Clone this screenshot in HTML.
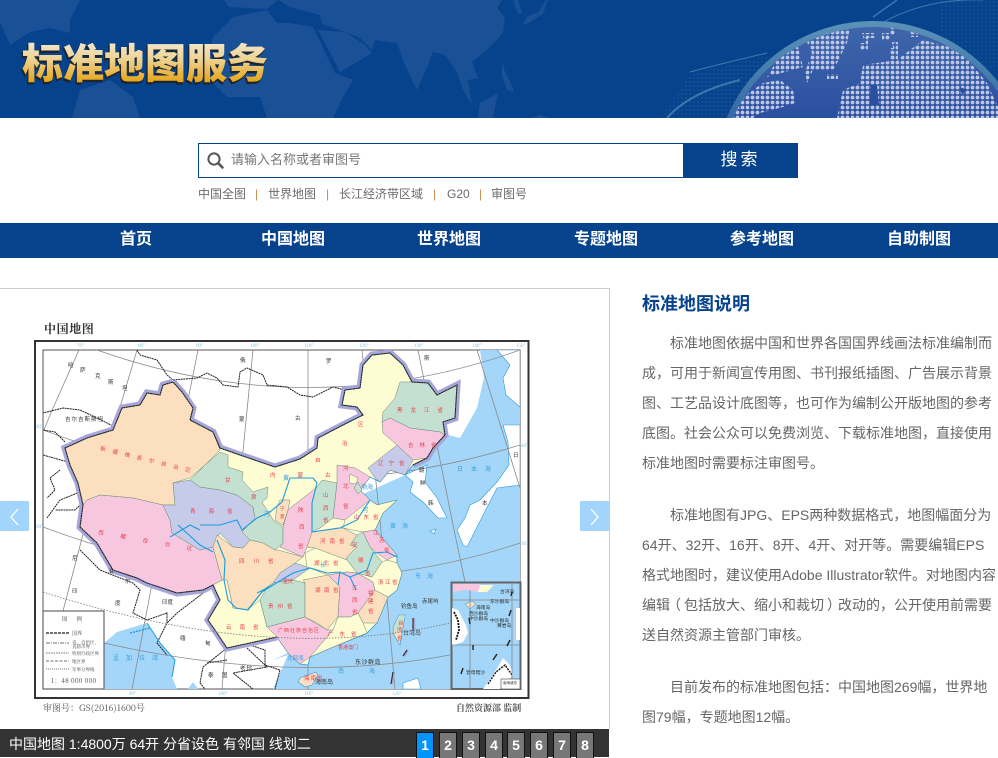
<!DOCTYPE html>
<html lang="zh-CN">
<head>
<meta charset="utf-8">
<title>标准地图服务</title>
<style>
html,body{margin:0;padding:0;background:#fff}
body{width:998px;height:757px;overflow:hidden;position:relative;font-family:"Liberation Sans","Noto Sans CJK SC",sans-serif}
.abs{position:absolute;white-space:nowrap}
#search{left:198px;top:143px;width:600px;height:35px;box-sizing:border-box;border:1px solid #06438c;background:#fff}
#btn{left:683px;top:143px;width:115px;height:35px;background:#06438c;color:#fff;font-size:17px;line-height:34px;text-align:center;letter-spacing:3px}
#ph{left:231px;top:151px;font-size:13px;line-height:18px;color:#777}
.lk{top:186px;font-size:12px;line-height:16px;color:#6b6b6b}
.sep{top:186px;font-size:12px;line-height:16px;color:#c08a50}
#nav{left:0;top:223px;width:998px;height:35px;background:#06438c}
.ni{top:223px;width:120px;text-align:center;color:#fff;font-weight:700;font-size:16px;line-height:33px}
#box{left:-1px;top:288px;width:611px;height:441px;box-sizing:border-box;border:1px solid #ccc;border-left:0;border-bottom:0;background:#fff}
.arr{top:501px;width:29px;height:30px;background:#a3d5fc}
#bar{left:0;top:729px;width:609px;height:28px;background:#333}
#cap{left:9px;top:734px;color:#fff;font-size:14px;line-height:20px}
.pg{top:732px;width:16px;height:25px;border:1px solid #111;border-bottom:0;background:#777;color:#fff;font-weight:700;font-size:14px;line-height:25px;text-align:center;margin-left:-1px}
#tt{left:642px;top:291px;color:#06438c;font-size:18px;font-weight:700;line-height:26px}
.p{left:642px;font-size:14px;line-height:30px;color:#666}
.ind{display:inline-block;width:28px}
.c{font-family:"Noto Sans CJK TC",sans-serif}
.l{position:relative;left:-3px}
.r{position:relative;left:3px}
</style>
</head>
<body>

<svg class="abs" style="left:0;top:0" width="998" height="118" viewBox="0 0 998 118">
<defs>
<linearGradient id="g" x1="0" y1="40" x2="0" y2="83" gradientUnits="userSpaceOnUse">
<stop offset="0" stop-color="#f3ead2"/><stop offset=".45" stop-color="#edd293"/><stop offset="1" stop-color="#e6a312"/>
</linearGradient>
<pattern id="dots" width="5" height="5" patternUnits="userSpaceOnUse"><circle cx="2.5" cy="2.5" r="1.9" fill="#bcc6e4"/></pattern>
<pattern id="fine" width="4" height="4" patternUnits="userSpaceOnUse"><circle cx="2" cy="2" r=".8" fill="#3f74b0"/></pattern>
<clipPath id="ball"><circle cx="873" cy="180" r="153"/></clipPath>
<linearGradient id="ballg" x1="0" y1="27" x2="0" y2="118" gradientUnits="userSpaceOnUse"><stop offset="0" stop-color="#3f66ab"/><stop offset="1" stop-color="#2b4fa0"/></linearGradient>
<linearGradient id="ring" x1="0" y1="21" x2="0" y2="118" gradientUnits="userSpaceOnUse"><stop offset="0" stop-color="#5c92b8"/><stop offset="1" stop-color="#336aa6"/></linearGradient>
</defs>
<rect width="998" height="118" fill="#06438c"/>
<g fill="#1a5096">
<path d="M0,0H80L70,20L70,33L50,28L30,32L10,45L0,22Z"/>
<path d="M72,118L80,90L110,80L133,97L140,118Z"/>
<path d="M224,0H278L267,9L229,7Z"/>
<path d="M213,37L233,17L267,10L277,23L290,23L313,27L335,73L353,80L343,97L333,118H267L260,97L227,97L213,83L210,57Z"/>
<path d="M278,0L290,7L320,15L322,24L345,32L360,38L372,50L375,40L397,43L405,65L417,90L428,65L433,52L445,55L457,72L463,90L472,105L468,80L478,78L472,62L487,50L503,33L505,17L497,8L502,0Z"/>
<path d="M318,30L345,32L365,45L372,53L340,72Z"/>
<path d="M513,0H518L522,13L518,14Z"/>
<path d="M523,23L528,16L538,12L546,0H548L543,14L530,22L525,25Z"/>
<path d="M502,62L505,72L512,85L514,92L507,90L502,75Z"/>
<path d="M478,118L480,103L498,93L493,118Z"/>
<path d="M530,118L540,115L550,118Z"/>
</g>
<path d="M660,118L690,75L770,55L770,118Z" fill="url(#fine)" opacity=".5"/>
<rect x="940" y="0" width="58" height="70" fill="url(#fine)" opacity=".45"/>
<g fill="none" stroke="#4d82b8" opacity=".8">
<path d="M667,118Q690,92 740,80" stroke-width="2"/>
<path d="M690,72Q720,64 767,53" stroke-width="1.2"/>
<path d="M873,17L897,0" stroke-width="1.5"/>
<path d="M880,24Q925,-2 983,0" stroke-width="1"/>
</g>
<circle cx="873" cy="180" r="159" fill="url(#ring)"/>
<circle cx="873" cy="180" r="153" fill="url(#ballg)"/>
<g clip-path="url(#ball)" fill="url(#dots)">
<path d="M850,28L847,43L837,63L833,70L813,70L807,83L805,72L812,53L807,42L827,33Z"/>
<path d="M797,43L803,67L767,77L777,60Z"/>
<path d="M827,74H838V79H827Z"/>
<path d="M863,65L897,60L923,40L960,50L987,83L998,107V118H837L843,90L860,83Z"/>
<path d="M733,118L743,97L763,83L780,80L793,90L795,103L783,107L760,113L753,118Z"/>
<path d="M862,33H875V38H868V50H860V43H865Z"/>
<path d="M882,33H890V40H882ZM890,28H895V35H890ZM892,42H898V60H890V48H893ZM910,32H918V37H910Z"/>
</g>
<g fill="#2b4fa0"><path d="M871,85H877L879,105H870ZM960,87L967,90L962,95Z"/></g>
<text x="21" y="80" font-family="'Noto Sans CJK SC',sans-serif" font-size="41" font-weight="900" fill="#1e2430" stroke="#1e2430" stroke-width=".8">标准地图服务</text>
<text x="22" y="78" font-family="'Noto Sans CJK SC',sans-serif" font-size="41" font-weight="900" fill="url(#g)">标准地图服务</text>
</svg>

<div class="abs" id="search"></div>
<svg class="abs" style="left:206px;top:151px" width="20" height="20" viewBox="0 0 20 20"><circle cx="8" cy="8" r="5.6" fill="none" stroke="#555" stroke-width="2"/><path d="M12.2,12.2L16.5,16.5" stroke="#555" stroke-width="2.6" stroke-linecap="round"/></svg>
<div class="abs" id="ph">请输入名称或者审图号</div>
<div class="abs" id="btn">搜索</div>

<div class="abs lk" style="left:198px">中国全图</div><div class="abs sep" style="left:255px">|</div>
<div class="abs lk" style="left:268px">世界地图</div><div class="abs sep" style="left:326px">|</div>
<div class="abs lk" style="left:339px">长江经济带区域</div><div class="abs sep" style="left:433px">|</div>
<div class="abs lk" style="left:447px">G20</div><div class="abs sep" style="left:479px">|</div>
<div class="abs lk" style="left:491px">审图号</div>

<div class="abs" id="nav"></div>
<div class="abs ni" style="left:76px">首页</div>
<div class="abs ni" style="left:233px">中国地图</div>
<div class="abs ni" style="left:389px">世界地图</div>
<div class="abs ni" style="left:546px">专题地图</div>
<div class="abs ni" style="left:702px">参考地图</div>
<div class="abs ni" style="left:859px">自助制图</div>

<div class="abs" id="box"></div>

<svg class="abs" style="left:0;top:288px;filter:blur(.3px)" width="608" height="441" viewBox="0 288 608 441">
<defs>
<path id="china" d="M173,382L182,392L193,408L190,420L213,432L220,448L240,455L275,467L300,459L317,448L318,438L343,425L363,415L357,407L342,405L345,390L360,388L363,365L372,355L390,353L403,365L412,382L428,383L437,395L457,385L455,418L443,422L445,435L433,448L427,458L413,465L405,475L390,470L380,482L370,477L360,490L370,500L377,505L397,500L383,513L375,530L397,555L397,563L402,573L397,590L388,597L377,623L367,633L363,635L333,647L310,657L308,665L300,664L288,653L277,637L250,643L227,648L217,633L208,620L220,600L213,585L203,590L177,593L147,583L137,578L113,570L97,543L80,527L83,505L78,483L70,465L65,448L87,438L113,430L122,408L140,405L147,393L160,395L163,385Z"/>
<path id="b1" d="M173,382L182,392L193,408L190,420L213,432L220,448L240,455L275,467L300,459L317,448L318,438L343,425L363,415L357,407L342,405L345,390L360,388L363,365L372,355L390,353L403,365L412,382L428,383L437,395L457,385L455,418L443,422L445,435L433,448L427,458L413,465"/>
<path id="b2" d="M277,637L250,643L227,648L217,633L208,620L220,600L213,585L203,590L177,593L147,583L137,578L113,570L97,543L80,527L83,505L78,483L70,465L65,448L87,438L113,430L122,408L140,405L147,393L160,395L163,385L173,382"/>
<clipPath id="inset"><rect x="452" y="584" width="68" height="105"/></clipPath>
<clipPath id="inner"><rect x="43" y="350" width="477" height="339"/></clipPath>
</defs>

<text x="44" y="333" font-family="'Noto Serif CJK SC',serif" font-size="12" font-weight="700" fill="#333" letter-spacing=".6">中国地图</text>
<rect x="35" y="341" width="493.500" height="357" fill="#fff" stroke="#333" stroke-width="2"/>
<rect x="43" y="350" width="477" height="339" fill="#fff" stroke="#555" stroke-width="1"/>

<g clip-path="url(#inner)">
<path d="M480,350L484,378L477,408L460,438L448,435L433,448L413,465L405,475L350,500L340,560L300,664L288,653L273,660V689H520V350Z" fill="#a3d6f8"/>
<path d="M104,643L117,632L147,623L160,643L175,660L172,677L177,689H104Z" fill="#a3d6f8"/>
<path d="M188,689L193,682L198,689Z" fill="#a3d6f8"/>
<g fill="#fff" stroke="#2a9ae0" stroke-width=".6">
<path d="M497,350L510,365L503,378L506,395L520,407V350Z"/>
<path d="M520,425L503,425L508,442L509,465L497,482L480,500L470,505L465,518L457,530L463,545L467,547L477,527L497,488L520,485V447Z"/>
<path d="M405,475L427,465L425,482L437,498L447,518L438,518L423,502L410,492L413,482Z"/>
<path d="M403,683L418,678L421,689H403Z"/>
<path d="M430,531L436,529L434,534Z"/>
</g>
<path d="M273,660L288,655L273,689Z" fill="#fff"/>

<g fill="none" stroke="#8a8a8a" stroke-width=".8">
<path d="M97,350Q310,425 520,350"/>
<path d="M43,430Q280,520 520,445"/>
<path d="M43,527Q290,620 520,543"/>
<path d="M104,643Q290,685 450,655"/>
<path d="M79,350L53,408L43,432"/>
<path d="M137,350L88,515L63,611"/>
<path d="M198,350L167,505L132,689"/>
<path d="M253,350L237,512L222,689"/>
<path d="M308,350V689"/>
<path d="M362,350L380,520L395,689"/>
<path d="M418,350L452,520L465,582"/>
<path d="M477,350L520,488"/>
</g>

<g fill="none" stroke="#222" stroke-width="1" stroke-dasharray="2 .6">
<path d="M137,350L140,355L157,360L167,375L173,380L197,378L207,373L217,378L223,385L238,387L240,372L247,368L263,375L267,385L287,387L300,395L313,397L333,387L345,390"/>
<path d="M117,428L97,418L80,410L63,408L43,413"/>
<path d="M65,442L55,432L43,430M68,462L43,455M47,518L60,500L80,492M83,502L75,510L55,510"/>
<path d="M60,470L50,478L55,490L47,498"/>
<path d="M80,550L100,570L133,583L140,590L133,613L147,620L167,613L167,623L157,643L167,655"/>
<path d="M207,590L177,613L167,623"/>
<path d="M227,648L203,667L200,683L205,689"/>
<path d="M247,648L267,667L233,673L253,689"/>
<path d="M227,660L207,663"/>
<path d="M250,645L265,650L265,665L280,670L275,689"/>
</g>

<use href="#b1" fill="none" stroke="#a8a6d9" stroke-width="7"/>
<use href="#b2" fill="none" stroke="#a8a6d9" stroke-width="7"/>
<use href="#china" fill="#fefcd3" stroke="#2a9ae0" stroke-width=".8"/>

<g stroke="#6d8a78" stroke-width=".5">
<path fill="#fbdfbe" d="M173,382L182,392L193,408L190,420L213,432L220,450L205,465L190,478L173,483L175,505L163,505L133,498L100,495L87,500L83,505L78,483L70,465L65,448L87,438L113,430L122,408L140,405L147,393L160,395L163,385Z"/>
<path fill="#f7c7df" d="M87,500L100,495L133,498L163,505L170,520L172,533L200,550L213,547L222,580L213,585L203,590L177,593L147,583L137,578L113,570L97,543L80,527L83,505Z"/>
<path fill="#c5cbe8" d="M190,480L200,487L220,490L237,495L253,507L255,518L242,532L250,540L243,548L233,547L220,533L213,547L200,550L172,533L170,520L163,505L175,505L173,483Z"/>
<path fill="#c3e0d0" d="M220,452L228,455L228,467L243,472L242,480L253,492L268,487L267,498L262,502L272,518L273,520L283,527L283,543L275,550L263,543L250,540L242,532L255,518L253,507L237,495L220,490L200,487L190,480L205,465Z"/>
<path fill="#fbdfbe" d="M280,500L290,500L288,510L283,525L275,520L277,507Z"/>
<path fill="#f7c7df" d="M290,508L307,495L317,487L312,503L312,533L307,547L303,557L280,547L283,543L283,527L288,510Z"/>
<path fill="#c3e0d0" d="M322,480L337,483L333,518L320,528L312,532L312,503L315,490Z"/>
<path fill="#f7c7df" d="M337,465L355,468L370,477L360,490L370,500L353,515L345,520L333,518L337,483Z"/>
<path fill="#fefcd3" d="M350,474L358,478L356,484L349,483Z"/>
<path fill="#c3e0d0" d="M358,482L362,490L358,494L354,488Z"/>
<path fill="#fefcd3" d="M345,520L370,500L377,505L397,500L383,513L375,530L363,532L343,528Z"/>
<path fill="#fbdfbe" d="M312,532L337,528L343,528L357,535L350,545L357,547L347,557L347,563L315,548L307,547Z"/>
<path fill="#f7c7df" d="M363,532L375,530L397,555L387,560L377,553L370,547Z"/>
<path fill="#c3e0d0" d="M357,535L363,532L370,547L382,562L372,577L357,573L347,560L347,557L357,547L350,545Z"/>
<path fill="#fefcd3" d="M305,553L315,548L347,560L357,573L347,572L328,575L307,567Z"/>
<path fill="#c5cbe8" d="M295,563L307,567L310,568L293,580L273,583L280,573Z"/>
<path fill="#fbdfbe" d="M217,535L233,547L243,548L250,540L263,543L275,550L278,550L303,557L295,563L280,573L273,583L263,590L247,610L233,608L227,580L222,580L213,547Z"/>
<path fill="#fefcd3" d="M222,580L227,580L233,608L247,610L260,600L267,627L277,637L250,643L227,648L217,633L208,620L220,600L213,585Z"/>
<path fill="#c3e0d0" d="M260,600L267,587L273,583L293,580L305,583L305,617L267,627Z"/>
<path fill="#f7c7df" d="M267,627L305,617L327,630L333,630L310,657L300,664L288,653L277,637Z"/>
<path fill="#fbdfbe" d="M303,580L328,575L340,587L338,617L327,630L317,623L305,617L305,583Z"/>
<path fill="#f7c7df" d="M328,575L347,572L357,573L373,582L375,590L358,613L350,617L338,617L340,587Z"/>
<path fill="#fbdfbe" d="M375,590L388,597L377,623L363,623L358,613Z"/>
<path fill="#fefcd3" d="M372,577L382,562L387,560L397,563L402,573L397,590L388,597L375,590L373,582L357,573Z"/>
<path fill="#fefcd3" d="M333,630L338,617L350,617L358,613L363,623L367,633L333,647L310,657Z"/>
<path fill="#c3e0d0" d="M383,412L395,398L400,382L412,382L428,383L437,395L457,385L455,418L443,422L445,435L440,432L410,428L390,418L382,422Z"/>
<path fill="#f7c7df" d="M382,422L390,418L410,428L440,432L445,435L433,448L427,458L413,460L397,445L383,433Z"/>
<path fill="#c5cbe8" d="M368,468L397,445L413,460L405,475L390,470L380,482L375,478Z"/>
</g>
<path d="M399,615L405,615L403,628L400,645L394,635L393,627Z" fill="#fde0bd" stroke="#2a9ae0" stroke-width=".6"/>
<path d="M400,616L405,616L402,626L396,634L394,627Z" fill="#c3e0d0" stroke="none"/>
<path d="M300,678L316,672L318,675L312,685L305,687L298,682Z" fill="#fbdfbe" stroke="#2a9ae0" stroke-width=".6"/>

<use href="#b1" fill="none" stroke="#222" stroke-width="1.1" stroke-dasharray="2 .4"/>
<use href="#b2" fill="none" stroke="#222" stroke-width="1.1" stroke-dasharray="2 .4"/>

<g fill="none" stroke="#1b9be0" stroke-width="1.1">
<path d="M200,525L220,525L237,520L242,530L257,518L270,512L282,502L287,487L290,478L313,478L317,483L312,503L312,532L340,528L357,520L370,500"/>
<path d="M257,593L273,585L293,573L310,568L327,573L340,572L350,577L367,570L373,553L387,552L397,557"/>
<path d="M217,540L225,560L224,580L228,600L236,608L248,610L262,592L273,585"/>
<path d="M178,525L200,545L213,552"/>
<path d="M350,577L356,590M340,572L338,585"/>
<path d="M170,537L190,525L200,530"/>
</g>
<path d="M147,623L160,643L175,660L172,677" fill="none" stroke="#1b9be0" stroke-width="1"/>
<path d="M130,633L150,628" fill="none" stroke="#1b9be0" stroke-width="1.4" stroke-dasharray="2 1"/>
<path d="M43,592Q270,665 450,623" fill="none" stroke="#777" stroke-width=".8" stroke-dasharray="1.500 1.500"/>
<g stroke="#a8a6d9" stroke-width="2.4"><path d="M414,618V630M408,650L404,656M394,672L392,684"/></g>
<g stroke="#333" stroke-width="1.2"><path d="M413,618V630M407,650L403,656M393,672L391,684"/></g>

<g fill="#e8414c" font-family="'Noto Sans CJK SC',sans-serif" font-size="5.500">
<text x="100" y="450" transform="rotate(14 100 450)" letter-spacing="7">新疆维吾尔自治区</text>
<text x="98" y="534" transform="rotate(10 98 534)" letter-spacing="17">西藏自治区</text>
<text x="190" y="513" letter-spacing="13">青海省</text>
<text x="225" y="482">甘</text><text x="251" y="499">肃</text>
<text x="270" y="477" letter-spacing="22">内蒙古</text>
<text x="315" y="462">自</text><text x="342" y="445">治</text><text x="358" y="426">区</text>
<text x="239" y="563" letter-spacing="9">四川省</text>
<text x="226" y="629" letter-spacing="8">云南省</text>
<text x="268" y="608" letter-spacing="4">贵州省</text>
<text x="278" y="632" font-size="5" letter-spacing="1">广西壮族自治区</text>
<text x="397" y="412" letter-spacing="8">黑龙江省</text>
<text x="408" y="447" letter-spacing="6">吉林省</text>
<text x="378" y="465" letter-spacing="5">辽宁省</text>
<text x="343" y="470">河</text><text x="343" y="488">北</text><text x="343" y="508">省</text>
<text x="323" y="497">山</text><text x="323" y="510">西</text><text x="323" y="522">省</text>
<text x="298" y="512">陕</text><text x="299" y="529">西</text><text x="298" y="548">省</text>
<text x="280" y="510" font-size="4.500">宁</text><text x="280" y="518" font-size="4.500">夏</text>
<text x="354" y="519" letter-spacing="4">山东省</text>
<text x="320" y="543" letter-spacing="4">河南省</text>
<text x="314" y="565" letter-spacing="4">湖北省</text>
<text x="352" y="547">安</text><text x="358" y="562">徽</text><text x="365" y="575">省</text>
<text x="373" y="535">江</text><text x="379" y="542">苏</text><text x="384" y="552">省</text>
<text x="378" y="584" letter-spacing="1.500">浙江省</text>
<text x="352" y="590">江</text><text x="352" y="602">西</text><text x="352" y="614">省</text>
<text x="368" y="595">福</text><text x="368" y="603">建</text><text x="368" y="613">省</text>
<text x="315" y="592" letter-spacing="3.500">湖南省</text>
<text x="328" y="636" letter-spacing="6">广东省</text>
<text x="283" y="583" font-size="5">重庆</text>
<text x="398" y="625">台</text><text x="397" y="632">湾</text><text x="397" y="640">省</text>
<text x="304" y="680" letter-spacing="1">海南省</text>
<text x="338" y="649" font-size="5">香港澳门</text>
</g>
<g fill="#333" font-family="'Noto Sans CJK SC',sans-serif" font-size="5.500">
<text x="68" y="367">哈</text><text x="80" y="372">萨</text><text x="95" y="378">克</text><text x="108" y="384">斯</text><text x="122" y="390">坦</text>
<text x="239" y="421">蒙</text><text x="295" y="420">古</text>
<text x="240" y="362">俄</text><text x="326" y="363">罗</text><text x="424" y="360">斯</text>
<text x="65" y="421" letter-spacing="1">吉尔吉斯斯坦</text>
<text x="72" y="560">尼</text><text x="108" y="573">泊</text><text x="125" y="583">尔</text>
<text x="72" y="593">印</text><text x="115" y="605">度</text><text x="162" y="604">印度</text>
<text x="180" y="640">缅</text><text x="205" y="645">甸</text>
<text x="208" y="677">泰</text><text x="222" y="677">国</text><text x="240" y="670" letter-spacing="1">老挝</text>
<text x="419" y="472">朝</text><text x="420" y="485">鲜</text><text x="428" y="505">韩</text>
<text x="513" y="457">日</text><text x="482" y="505">本</text>
<text x="403" y="635" fill="#444" font-size="6">台湾岛</text>
<text x="355" y="664" font-size="6" letter-spacing=".5">东沙群岛</text>
<text x="315" y="684" font-size="6">海南岛</text>
<text x="401" y="608">钓鱼岛</text>
<text x="422" y="603">赤尾屿</text>
</g>
<g fill="#3aa0dc" font-family="'Noto Sans CJK SC',sans-serif" font-size="6">
<text x="113" y="660" letter-spacing="7">孟加拉湾</text>
<text x="457" y="471" letter-spacing="8">日本海</text>
<text x="390" y="528" letter-spacing="6">黄海</text>
<text x="415" y="578" letter-spacing="6">东海</text>
<text x="338" y="673" letter-spacing="25">南海</text>
<text x="283" y="480">黄</text><text x="264" y="516">河</text><text x="361" y="489">渤海</text><text x="362" y="512">河</text>
<text x="320" y="567">长</text><text x="287" y="660" font-size="5.500">北部湾</text>
</g>
</g>

<rect x="43" y="611" width="61" height="78" fill="#fff" stroke="#666" stroke-width="1.200"/>
<g fill="#444" font-family="'Noto Serif CJK SC',serif" font-size="5">
<text x="62" y="621" letter-spacing="9" font-size="5.500">图例</text>
<text x="72" y="635">国界</text>
<text x="72" y="644" font-size="4.500">省、自治区、</text>
<text x="72" y="648" font-size="4.500">直辖市界</text>
<text x="72" y="655" font-size="4.500">特别行政区界</text>
<text x="72" y="663" font-size="4.500">地区界</text>
<text x="72" y="671" font-size="4.500">军事分界线</text>
<text x="51" y="683" font-size="6.500" letter-spacing=".3">1：48 000 000</text>
</g>
<g fill="none" stroke="#444" stroke-width=".8">
<path d="M46,633H69" stroke-width="1.600" stroke-dasharray="3 1"/>
<path d="M46,643H69" stroke-dasharray="4 1 1 1"/>
<path d="M46,653H69" stroke-dasharray="1.500 1"/>
<path d="M46,661H69" stroke-dasharray="3 1.500"/>
<path d="M46,669H69" stroke-dasharray="1 1"/>
</g>

<rect x="451.500" y="582.500" width="69" height="106.500" fill="#a3d6f8" stroke="#666" stroke-width="2"/>
<g clip-path="url(#inset)">
<path d="M453,584H480L478,592L465,590L453,592Z" fill="#f7c7df"/>
<path d="M480,585H494L487,592H478Z" fill="#fefcd3"/>
<path d="M465,604L472,601L476,604L470,609Z" fill="#fbdfbe" stroke="#1b9be0" stroke-width=".5"/>
<path d="M452,608L458,610L466,625L468,633L463,642L454,645H452Z" fill="#fff"/>
<path d="M454,612L458,620L459,630L456,640" fill="none" stroke="#111" stroke-width="1.800" stroke-dasharray="2 1"/>
<path d="M483,689L495,672L503,658L510,665L513,675L505,683L500,689Z" fill="#fff"/>
<path d="M488,684L496,672L505,665L512,675" fill="none" stroke="#111" stroke-width="1.400" stroke-dasharray="2 1"/>
<path d="M516,608H520V640H516Z" fill="#fff"/>
<g stroke="#888" stroke-width=".8" fill="none"><path d="M452,600H520M452,645H520M470,590V689M512,584V689"/></g>
<g stroke="#222" stroke-width="1.400"><path d="M511,610L509,616M512,592L511,596M469,618L470,624M510,640L507,646M497,654L493,660M463,668L461,674M473,645V650"/></g>
<rect x="501" y="679" width="19" height="10" fill="#fff" stroke="#444" stroke-width=".6"/>
<g fill="#333" font-family="'Noto Sans CJK SC',sans-serif" font-size="4.800">
<text x="500" y="593">台湾岛</text>
<text x="490" y="603">东沙群岛</text>
<text x="476" y="609">海南岛</text>
<text x="469" y="615">西沙群岛</text>
<text x="469" y="620">中沙群岛</text>
<text x="490" y="622">中沙群岛</text>
<text x="497" y="627">黄岩岛</text>
<text x="503" y="684" font-size="3.500">南海诸岛</text>
<text x="466" y="674">曾母暗沙</text>
</g>
</g>

<text x="43" y="711" font-family="'Noto Serif CJK SC',serif" font-size="9" fill="#555">审图号：GS(2016)1600号</text>
<text x="456" y="711" font-family="'Noto Serif CJK SC',serif" font-size="9" font-weight="700" fill="#555">自然资源部 监制</text>
<g fill="#7cc8e6" font-family="'Liberation Serif',serif" font-size="5">
<text x="77" y="347">70°</text><text x="138" y="347">80°</text><text x="196" y="347">90°</text><text x="250" y="347">100°</text><text x="304" y="347">110°</text><text x="359" y="347">120°</text><text x="414" y="347">130°</text><text x="472" y="347">140°</text><text x="516" y="347">150°</text>
<text x="36" y="428">40°</text><text x="36" y="528">30°</text><text x="521" y="447">40°</text><text x="521" y="545">30°</text>
<text x="129" y="695">90°</text><text x="218" y="695">100°</text><text x="304" y="695">110°</text><text x="392" y="695">120°</text>
</g>
</svg>

<div class="abs arr" style="left:0"></div>
<svg class="abs" style="left:0;top:501px" width="29" height="30" viewBox="0 0 29 30"><path d="M18,8L11,16L18,24" fill="none" stroke="#fff" stroke-width="1.300"/></svg>
<div class="abs arr" style="left:580px"></div>
<svg class="abs" style="left:580px;top:501px" width="29" height="30" viewBox="0 0 29 30"><path d="M11,8L18,16L11,24" fill="none" stroke="#fff" stroke-width="1.300"/></svg>

<div class="abs" id="bar"></div>
<div class="abs" id="cap">中国地图 1:4800万 64开 分省设色 有邻国 线划二</div>
<div class="abs pg" style="left:417px;background:#0094ff">1</div>
<div class="abs pg" style="left:440px">2</div>
<div class="abs pg" style="left:463px">3</div>
<div class="abs pg" style="left:486px">4</div>
<div class="abs pg" style="left:508px">5</div>
<div class="abs pg" style="left:531px">6</div>
<div class="abs pg" style="left:554px">7</div>
<div class="abs pg" style="left:577px">8</div>

<div class="abs" id="tt">标准地图说明</div>
<div class="abs p" style="top:328px"><span class="ind"></span>标准地图依据中国和世界各国国界线画法标准编制而<br>成<span class="c">，</span>可用于新闻宣传用图、书刊报纸插图、广告展示背景<br>图、工艺品设计底图等<span class="c">，</span>也可作为编制公开版地图的参考<br>底图。社会公众可以免费浏览、下载标准地图<span class="c">，</span>直接使用<br>标准地图时需要标注审图号。</div>
<div class="abs p" style="top:500px"><span class="ind"></span>标准地图有JPG、EPS两种数据格式<span class="c">，</span>地图幅面分为<br>64开、32开、16开、8开、4开、对开等。需要编辑EPS<br>格式地图时<span class="c">，</span>建议使用Adobe Illustrator软件。对地图内容<br>编辑<span class="l">（</span>包括放大、缩小和裁切<span class="r">）</span>改动的<span class="c">，</span>公开使用前需要<br>送自然资源主管部门审核。</div>
<div class="abs p" style="top:672px"><span class="ind"></span>目前发布的标准地图包括<span class="c">：</span>中国地图269幅<span class="c">，</span>世界地<br>图79幅<span class="c">，</span>专题地图12幅。</div>

</body>
</html>
